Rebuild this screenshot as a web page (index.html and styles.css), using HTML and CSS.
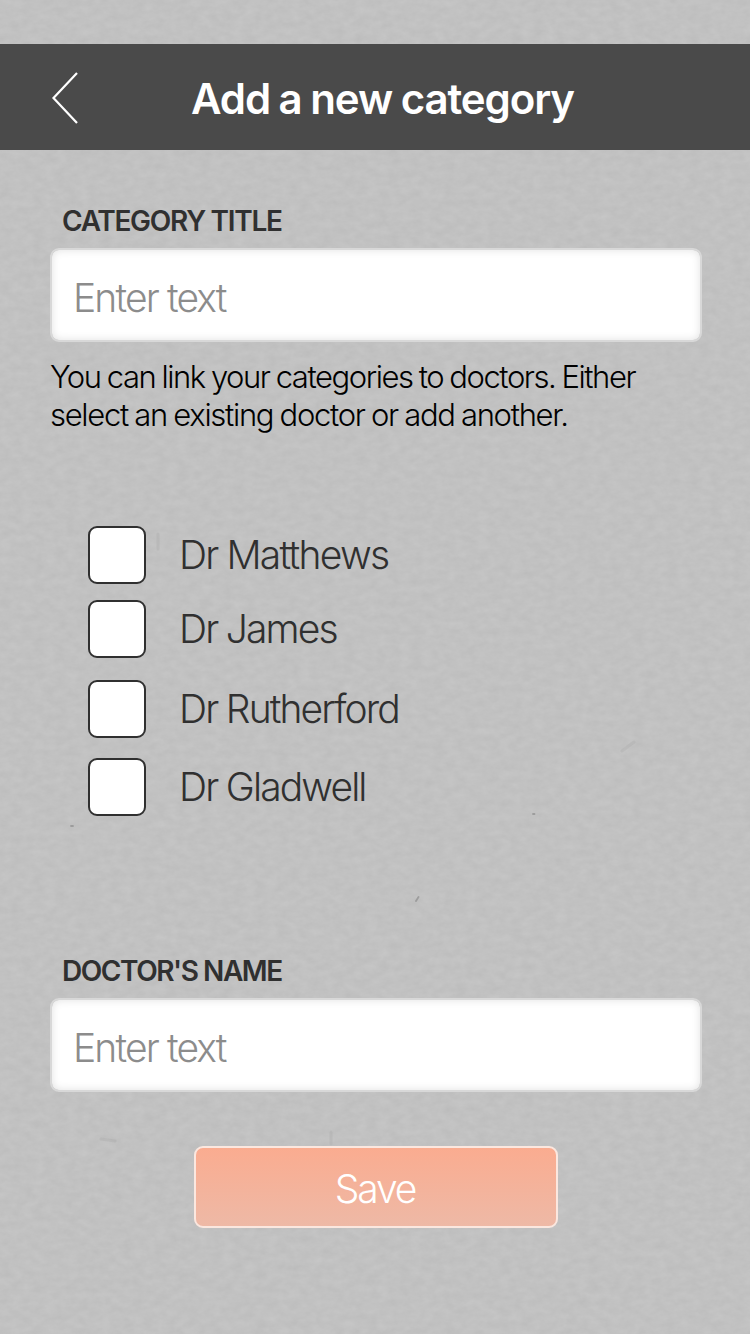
FILE: index.html
```html
<!DOCTYPE html>
<html lang="en">

<head>
    <meta charset="UTF-8">
    <meta name="viewport" content="width=device-width, initial-scale=1.0">
    <title>Add a new category</title>
    <link rel="stylesheet" href="styles.css">
</head>

<body>
    <!-- paper texture -->
    <svg class="paper" width="750" height="1334" aria-hidden="true">
        <filter id="grain" x="0" y="0" width="100%" height="100%" color-interpolation-filters="sRGB">
            <feTurbulence type="fractalNoise" baseFrequency="0.09 0.14" numOctaves="4" seed="8" />
            <feColorMatrix values="0.045 0 0 0 0.735  0.045 0 0 0 0.735  0.045 0 0 0 0.735  0 0 0 0 1" />
        </filter>
        <rect width="750" height="1334" filter="url(#grain)" />
        <g fill="none" stroke="#8d8d8d" stroke-linecap="round">
            <path d="M533 814h1.500M416 901l2.500-4M71 826h2" stroke-width="1.800" opacity="0.7" />
            <path d="M158 534v15M331 1132v12M101 1139l14 2M622 751l12-9" stroke-width="3" opacity="0.16" />
        </g>
    </svg>

    <header class="header">
        <a class="back" href="#" aria-label="Back">
            <svg width="30" height="54" viewBox="0 0 30 54">
                <path d="M27 2L3.500 27L27 52" fill="none" stroke="#fff" stroke-width="2.200" />
            </svg>
        </a>
        <h1>Add a new category</h1>
    </header>

    <form class="category-form">
        <label class="field-label title-label" for="category-title">CATEGORY TITLE</label>
        <input class="text-field" type="text" id="category-title" placeholder="Enter text">

        <p class="hint">You can link your categories to doctors. Either<br><span class="hint-end">select an existing doctor or add another.</span></p>

        <div class="doctors">
            <label class="doctor matthews"><input type="checkbox"><span>Dr Matthews</span></label>
            <label class="doctor james"><input type="checkbox"><span>Dr James</span></label>
            <label class="doctor rutherford"><input type="checkbox"><span>Dr Rutherford</span></label>
            <label class="doctor gladwell"><input type="checkbox"><span>Dr Gladwell</span></label>
        </div>

        <label class="field-label name-label" for="doctor-name">DOCTOR'S NAME</label>
        <input class="text-field" type="text" id="doctor-name" placeholder="Enter text">

        <button class="save" type="button">Save</button>
    </form>
</body>

</html>
```
FILE: styles.css
```css
* {
    box-sizing: border-box;
}

body {
    margin: 0;
    padding-top: 44px;
    width: 750px;
    height: 1334px;
    overflow: hidden;
    background-color: #c1c1c1;
    color: #303030;
    font-family: Inter, "Liberation Sans", sans-serif;
}

.paper {
    position: absolute;
    top: 0;
    left: 0;
    z-index: -1;
}

.header {
    display: flex;
    align-items: center;
    height: 106px;
    padding-left: 50px;
    background-color: #4a4a4a;
}

.back {
    display: flex;
    width: 141px;
    padding-top: 2px;
}

h1 {
    margin: 0;
    padding-top: 3px;
    color: #fff;
    font-size: 42px;
    font-weight: 600;
    letter-spacing: -1.1px;
    word-spacing: -0.9px;
    white-space: nowrap;
}

.category-form {
    display: flex;
    flex-direction: column;
    padding: 53px 48px 0 50px;
}

.field-label {
    padding-left: 12px;
    height: 45px;
    line-height: 36px;
    font-size: 28px;
    font-weight: 600;
    letter-spacing: -1.3px;
    white-space: nowrap;
}

.text-field {
    width: 652px;
    height: 94px;
    padding: 4px 22px 0 21px;
    border: 2px solid #d8d8d8;
    border-radius: 9px;
    background-color: #fff;
    background-clip: padding-box;
    box-shadow: inset 0 0 8px rgba(0, 0, 0, 0.12);
    color: #303030;
    font-family: inherit;
    font-size: 39px;
    font-weight: 280;
    letter-spacing: -1.85px;
    word-spacing: 0;
    outline: none;
}

.text-field::placeholder {
    color: #8c8c8c;
    opacity: 1;
}

.hint {
    margin: 16px 0 0;
    color: #000;
    font-size: 31px;
    font-weight: 300;
    line-height: 38px;
    letter-spacing: -1.45px;
    word-spacing: -1.1px;
    white-space: nowrap;
}

.hint-end {
    letter-spacing: -1.3px;
}

.doctors {
    display: flex;
    flex-direction: column;
    margin-top: 92px;
    padding-left: 38px;
}

.doctor {
    display: flex;
    align-items: center;
    gap: 33px;
    height: 58px;
    font-size: 39px;
    font-weight: 280;
    letter-spacing: -1.9px;
    word-spacing: -0.5px;
    white-space: nowrap;
}

.doctor span {
    padding-bottom: 2px;
}

.doctor input {
    appearance: none;
    width: 58px;
    height: 58px;
    margin: 0;
    border: 2px solid #303030;
    border-radius: 9px;
    background-color: #fff;
}

.matthews {
    letter-spacing: -1.7px;
}

.james {
    margin-top: 16px;
}

.rutherford {
    margin-top: 22px;
}

.gladwell {
    margin-top: 20px;
}

.name-label {
    margin-top: 137px;
    letter-spacing: -1.45px;
}

.save {
    align-self: center;
    width: 364px;
    height: 82px;
    margin-top: 54px;
    padding: 2px 2px 0 0;
    border: 2px solid #fbe7df;
    border-radius: 9px;
    background: linear-gradient(#faac90, #eeb9a6);
    color: #fff;
    font-family: inherit;
    font-size: 39px;
    font-weight: 290;
    letter-spacing: -2.1px;
}
```
